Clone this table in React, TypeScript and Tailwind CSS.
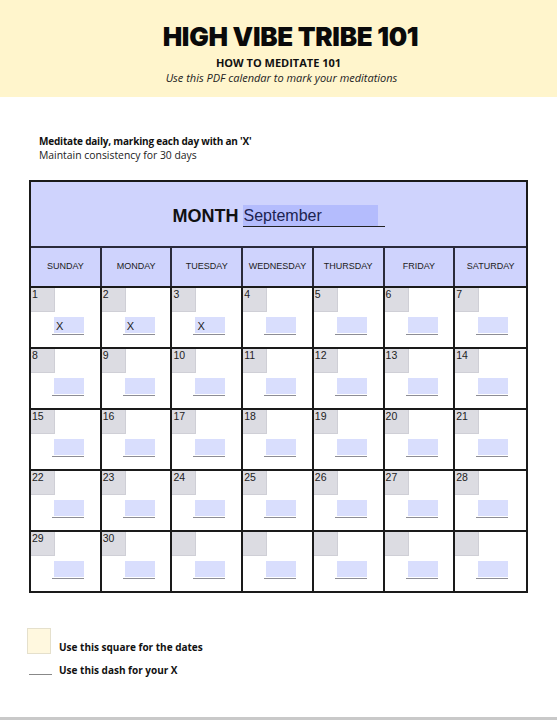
import React from "react";

const days = ["SUNDAY", "MONDAY", "TUESDAY", "WEDNESDAY", "THURSDAY", "FRIDAY", "SATURDAY"];

type CellData = { n: string; x?: boolean };

const weeks: CellData[][] = [
  [{ n: "1", x: true }, { n: "2", x: true }, { n: "3", x: true }, { n: "4" }, { n: "5" }, { n: "6" }, { n: "7" }],
  [{ n: "8" }, { n: "9" }, { n: "10" }, { n: "11" }, { n: "12" }, { n: "13" }, { n: "14" }],
  [{ n: "15" }, { n: "16" }, { n: "17" }, { n: "18" }, { n: "19" }, { n: "20" }, { n: "21" }],
  [{ n: "22" }, { n: "23" }, { n: "24" }, { n: "25" }, { n: "26" }, { n: "27" }, { n: "28" }],
  [{ n: "29" }, { n: "30" }, { n: "" }, { n: "" }, { n: "" }, { n: "" }, { n: "" }],
];

function Cell({ d, last }: { d: CellData; last: boolean }) {
  return (
    <div className={`relative h-full ${last ? "" : "border-r-2 border-[#1a1a1a]"}`}>
      <div className="absolute left-0 top-0 w-[24px] h-[24px] bg-[#dcdce2] border-r border-b border-[#cfcfd6]">
        <span className="absolute left-[1px] top-[1px] text-[10.5px] leading-none text-[#222]" style={{ fontFamily: "'Liberation Sans', Arial, sans-serif" }}>
          {d.n}
        </span>
      </div>
      <div className="absolute left-[23px] top-[29px] w-[30px] h-[16px] bg-[#d9defd] flex items-center">
        {d.x && (
          <span className="ml-[2px] mt-[3px] text-[11px] leading-none text-[#222]" style={{ fontFamily: "'Liberation Sans', Arial, sans-serif" }}>
            X
          </span>
        )}
      </div>
      <div className="absolute left-[21px] top-[46px] w-[32px] h-[1px] bg-[#8d8d95]" />
    </div>
  );
}

export default function App() {
  return (
    <div className="min-h-[720px] h-[720px] flex flex-col bg-white" style={{ fontFamily: "'Open Sans', 'Noto Sans', sans-serif" }}>
      <div className="h-[97px] bg-[#fff5cc] flex flex-col items-center">
        <div className="ml-[24px] mt-[21px] text-[26px] leading-[31px] font-black text-[#0a0a0a] tracking-[-0.3px]" style={{ fontFamily: "Inter, sans-serif" }}>
          HIGH VIBE TRIBE 101
        </div>
        <div className="mt-[4px] text-[11px] leading-[14px] font-bold text-[#111]">HOW TO MEDITATE 101</div>
        <div className="ml-[6px] mt-[1px] text-[11px] leading-[14px] italic text-[#222]">Use this PDF calendar to mark your meditations</div>
      </div>

      <div className="mt-[37px] pl-[39px]">
        <div className="text-[10px] leading-[14px] font-bold text-[#111] tracking-[-0.2px]">Meditate daily, marking each day with an 'X'</div>
        <div className="text-[10.4px] leading-[14px] text-[#222]">Maintain consistency for 30 days</div>
      </div>

      <div className="mt-[18px] ml-[29px] w-[499px] border-2 border-[#1a1a1a]" style={{ fontFamily: "'Liberation Sans', Arial, sans-serif" }}>
        <div className="h-[64px] bg-[#cfd3fd] flex items-center justify-center">
          <span className="text-[18px] font-bold text-[#111] mt-[4px]">MONTH</span>
          <span className="relative ml-[4px] mt-[4px] w-[142px] h-[22px] border-b border-[#222]">
            <span className="absolute left-0 top-0 w-[135px] h-[21px] bg-[#b4bcfd]" />
            <span className="absolute left-[1px] top-[1px] text-[16px] leading-[20px] text-[#1c2350]">September</span>
          </span>
        </div>
        <div className="h-[40px] grid grid-cols-7 border-t-2 border-[#2a2a3a] bg-[#cfd3fd]">
          {days.map((d, i) => (
            <div
              key={d}
              className={`flex items-center justify-center text-[9px] text-[#222] ${i < 6 ? "border-r-2 border-[#2a2a3a]" : ""}`}
            >
              {d}
            </div>
          ))}
        </div>
        {weeks.map((w, wi) => (
          <div key={wi} className="h-[61px] grid grid-cols-7 border-t-2 border-[#1a1a1a]">
            {w.map((d, i) => (
              <Cell key={i} d={d} last={i === 6} />
            ))}
          </div>
        ))}
      </div>

      <div className="mt-[35px] pl-[27px] flex items-end gap-[8px]">
        <div className="w-[24px] h-[26px] bg-[#fff8df] border border-[#e5e0cc]" />
        <div className="text-[10px] leading-[12px] font-bold text-[#111] mb-[1px]">Use this square for the dates</div>
      </div>
      <div className="mt-[10px] pl-[29px] flex items-center gap-[7px]">
        <div className="w-[23px] h-[1px] bg-[#888] mt-[8px]" />
        <div className="text-[10px] leading-[12px] font-bold text-[#111]">Use this dash for your X</div>
      </div>

      <div className="mt-auto h-[3px] bg-[#c9c9c9]" />
    </div>
  );
}
